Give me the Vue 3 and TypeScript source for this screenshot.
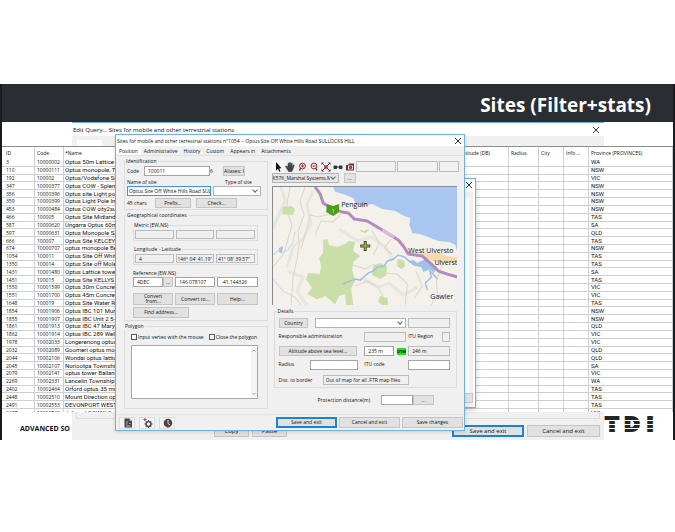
<script setup lang="ts">
import { ref } from 'vue'

interface Site {
  id: string
  code: string
  name: string
  province: string
}

const sites: Site[] = [
  ['3', '10000002', 'Optus 50m Lattice Tower', 'WA'],
  ['110', '10000111', 'Optus monopole, Tamworth', 'NSW'],
  ['192', '100002', 'Optus/Vodafone Site', 'VIC'],
  ['347', '10000377', 'Optus COW - Splendour', 'NSW'],
  ['356', '10000396', 'Optus site Light pole', 'NSW'],
  ['359', '10000399', 'Optus Light Pole Inner', 'NSW'],
  ['453', '10000484', 'Optus COW city2surf', 'NSW'],
  ['466', '100005', 'Optus Site Midlands', 'TAS'],
  ['587', '10000620', 'Ungarra Optus 60m', 'SA'],
  ['597', '10000631', 'Optus Monopole SAR', 'QLD'],
  ['666', '100007', 'Optus Site KELCEY TIER', 'TAS'],
  ['674', '10000707', 'optus monopole Bega', 'NSW'],
  ['1054', '100011', 'Optus Site Off White Hills', 'TAS'],
  ['1350', '100014', 'Optus Site off Mole Creek', 'TAS'],
  ['1431', '10001480', 'Optus Lattice tower', 'SA'],
  ['1451', '100015', 'Optus Site KELLYS LANE', 'TAS'],
  ['1550', '10001599', 'Optus 30m Concrete', 'VIC'],
  ['1551', '10001700', 'Optus 45m Concrete', 'VIC'],
  ['1648', '100019', 'Optus Site Water Reserve', 'TAS'],
  ['1854', '10001906', 'Optus IBC 101 Murray', 'NSW'],
  ['1855', '10001907', 'Optus IBC Unit 2 5-7', 'NSW'],
  ['1861', '10001913', 'Optus IBC 47 Mary St', 'QLD'],
  ['1862', '10001914', 'Optus IBC 289 Wellington', 'VIC'],
  ['1978', '10002033', 'Longerenong optus', 'VIC'],
  ['2032', '10002089', 'Goomeri optus mono', 'QLD'],
  ['2044', '10002106', 'Wondai optus lattice', 'QLD'],
  ['2045', '10002107', 'Nuriootpa Township', 'SA'],
  ['2079', '10002141', 'optus tower Ballan', 'VIC'],
  ['2269', '10002331', 'Lancelin Township', 'WA'],
  ['2402', '10002464', 'Orford optus 35 mq', 'TAS'],
  ['2448', '10002510', 'Mount Direction optus', 'TAS'],
  ['2491', '10002553', 'DEVONPORT WEST', 'TAS'],
  ['2697', '10002762', 'Julimar\\GGWW Optus', 'VIC'],
].map(([id, code, name, province]) => ({ id, code, name, province }))

const tabs = ['Position', 'Administrative', 'History', 'Custom', 'Appears in', 'Attachments']
const activeTab = ref('Position')

const code = ref('100011')
const siteName = ref('Optus Site Off White Hills Road SUL')
const refSystem = ref('4DEC')
const refLon = ref('146.078107')
const refLat = ref('-41.144326')
const altitude = ref('235 m')
const vertexMode = ref(false)
const closePolygon = ref(false)
</script>

<template>
  <main class="slide">
    <header class="banner"><h1>Sites (Filter+stats)</h1></header>

    <div class="stage">
      <section class="query" aria-label="Edit query">
        <div class="query-title">
          <span>Edit Query... Sites for mobile and other terrestrial stations</span>
          <button class="close big" aria-label="Close query">
            <svg viewBox="0 0 8 8"><path d="M1 1L7 7M7 1L1 7" /></svg>
          </button>
        </div>
        <div class="query-strip"><i></i></div>
        <div class="query-foot">
          <div class="query-panel"></div>
          <div class="query-actions">
            <button class="btn copy">Copy</button>
            <button class="btn paste">Paste</button>
            <button class="btn primary save">Save and exit</button>
            <button class="btn cancel">Cancel and exit</button>
          </div>
        </div>
      </section>

      <div class="grid-view">
        <table>
          <colgroup>
            <col class="c-id" /><col class="c-code" /><col /><col class="c-radius" />
            <col class="c-city" /><col class="c-city" /><col class="c-prov" />
          </colgroup>
          <thead>
            <tr>
              <th>ID</th><th>Code</th>
              <th><span class="name-head"><span>*Name</span><span>Altitude (DB)</span></span></th>
              <th>Radius</th><th>City</th><th>Info ...</th><th>Province (PROVINCES)</th>
            </tr>
          </thead>
          <tbody>
            <tr v-for="s in sites" :key="s.id">
              <td>{{ s.id }}</td><td>{{ s.code }}</td><td class="wide">{{ s.name }}</td>
              <td></td><td></td><td></td><td class="wide">{{ s.province }}</td>
            </tr>
          </tbody>
        </table>
      </div>

      <footer class="foot">
        <strong>ADVANCED SO</strong>
      </footer>
      <svg class="logo" viewBox="0 0 50 16" role="img" aria-label="TDI">
        <g text-anchor="middle">
          <text x="8" y="15">T</text><text x="28" y="15">D</text><text x="46" y="15">I</text>
        </g>
        <path d="M0 4.500H50M0 8.500H50M0 12.500H50" stroke="#fff" stroke-width="1" />
      </svg>

      <section class="back-window" aria-label="Background window">
        <button class="close" aria-label="Close background window">
          <svg viewBox="0 0 8 8"><path d="M1 1L7 7M7 1L1 7" /></svg>
        </button>
        <div class="back-body"></div>
        <div class="back-foot"><i></i></div>
      </section>

      <section class="dialog" aria-label="Site">
        <div class="title">
          <span>Sites for mobile and other terrestrial stations n°1054 -- Optus Site Off White Hills Road SULLOCKS HILL</span>
          <button class="close" aria-label="Close">
            <svg viewBox="0 0 8 8"><path d="M1 1L7 7M7 1L1 7" /></svg>
          </button>
        </div>
        <nav class="tabs">
          <button v-for="t in tabs" :key="t" :class="{ on: t === activeTab }" @click="activeTab = t">{{ t }}</button>
        </nav>

        <div class="body">
          <div class="left">
            <fieldset class="ident">
              <legend>Identification</legend>
              <div class="row code-row">
                <label for="code">Code</label>
                <input id="code" v-model="code" />
                <span>6</span>
                <button class="btn aliases">Aliases: 0</button>
              </div>
              <div class="site-grid">
                <label for="name">Name of site</label>
                <label for="type" class="type-label">Type of site</label>
                <input id="name" v-model="siteName" class="focus" />
                <div class="pick"><select id="type"><option></option></select></div>
              </div>
              <div class="row chars-row">
                <span>45 chars</span>
                <button class="btn">Prefix...</button>
                <button class="btn">Check...</button>
              </div>
            </fieldset>

            <fieldset class="geo">
              <legend>Geographical coordinates</legend>
              <fieldset class="inner">
                <legend>Metric (EW,NS)</legend>
                <div class="trio">
                  <input aria-label="Metric zone" readonly /><input aria-label="Metric east" readonly /><input aria-label="Metric north" readonly />
                </div>
              </fieldset>
              <fieldset class="inner">
                <legend>Longitude - Latitude</legend>
                <div class="trio">
                  <input aria-label="Zone" readonly value="4" />
                  <input aria-label="Longitude" class="tight" readonly value="146° 04' 41.19&quot;" />
                  <input aria-label="Latitude" class="tight" readonly value="41° 08' 39.57&quot;" />
                </div>
              </fieldset>
              <label class="ref-label" for="refsys">Reference (EW,NS)</label>
              <div class="trio ref-row">
                <div class="joined"><input id="refsys" v-model="refSystem" /><button class="btn">...</button></div>
                <input v-model="refLon" aria-label="Reference longitude" />
                <input v-model="refLat" aria-label="Reference latitude" />
              </div>
              <div class="trio tool-row">
                <button class="btn">Convert<br />from...</button>
                <button class="btn">Convert to...</button>
                <button class="btn">Help...</button>
              </div>
              <button class="btn find">Find address...</button>
            </fieldset>

            <fieldset class="poly">
              <legend>Polygon</legend>
              <div class="row checks">
                <label><input v-model="vertexMode" type="checkbox" />Input vertex with the mouse</label>
                <label><input v-model="closePolygon" type="checkbox" />Close the polygon</label>
              </div>
              <div class="area">
                <textarea aria-label="Polygon vertices"></textarea>
                <svg class="bar" viewBox="0 0 6 50"><path d="M1.500 4.500L3 3L4.500 4.500M1.500 46L3 47.500L4.500 46" /></svg>
              </div>
            </fieldset>
          </div>

          <div class="right">
            <div class="toolbar">
              <button class="tool on" aria-label="Select"><svg viewBox="0 0 10 10"><path d="M3 0V8.500L5 6.800L6.300 9.800L7.500 9.300L6.300 6.300H8.500Z" fill="#111" /></svg></button>
              <button class="tool" aria-label="Pan"><svg viewBox="0 0 10 10"><path d="M.5 4.500L2 4L3 5.500V1.500L4 1.300L4.400 4V.6L5.500 .5V4L6.400 1L7.300 1.300L7 4.500L8.500 2.800L9.300 3.300L7.800 7.500L6.500 9.800H3.800Z" fill="#444" stroke="#444" stroke-width=".6" /></svg></button>
              <button class="tool" aria-label="Zoom in"><svg viewBox="0 0 10 10"><circle cx="5.500" cy="4" r="2.900" fill="#fbe9e9" stroke="#863338" stroke-width="1" /><path d="M4 4H7M5.500 2.500V5.500" stroke="#d4262c" stroke-width="1.100" /><path d="M3.600 6.200L2.400 8.500" stroke="#444" stroke-width="1.400" /></svg></button>
              <button class="tool" aria-label="Zoom out"><svg viewBox="0 0 10 10"><circle cx="5" cy="4" r="2.900" fill="#fbe9e9" stroke="#863338" stroke-width="1" /><path d="M3.500 4H6.500" stroke="#d4262c" stroke-width="1.100" /><path d="M6.800 6.200L8 8.500" stroke="#444" stroke-width="1.400" /></svg></button>
              <button class="tool" aria-label="Full extent"><svg viewBox="0 0 10 10"><path d="M1.500 1.500L8.500 8.500M8.500 1.500L1.500 8.500" stroke="#555" stroke-width="1" /><path d="M3.300 3.300H6.700V6.700H3.300Z" fill="#d4262c" /><path d="M.5 .5H3L.5 3ZM7 .5H9.500V3ZM9.500 7V9.500H7ZM3 9.500H.5V7Z" fill="#444" /></svg></button>
              <button class="tool" aria-label="Find"><svg viewBox="0 0 10 10"><rect x=".5" y="3.500" width="3.600" height="3.600" rx="1" fill="#333" /><rect x="5.900" y="3.500" width="3.600" height="3.600" rx="1" fill="#333" /><path d="M4 5H6" stroke="#333" /></svg></button>
              <button class="tool" aria-label="Snapshot"><svg viewBox="0 0 10 10"><path d="M1 3H3L4 1.500H9V8.500H1Z" fill="#444" /><rect x="3" y="3.500" width="5" height="4" fill="#eee" /><circle cx="5.600" cy="5.500" r="1.700" fill="#d4262c" /></svg></button>
              <div class="readouts"><i></i><i></i><i></i></div>
            </div>
            <div class="row layer-row">
              <div class="pick layer"><select aria-label="Map layer"><option>K576_Marshal Systems.M</option></select></div>
              <button class="btn">...</button>
            </div>

            <svg class="map" viewBox="0 0 184 118" preserveAspectRatio="xMidYMid slice">
              <rect width="184" height="118" fill="#f3f1ea" />
              <g fill="none" stroke="#e7e5df" stroke-width="3">
                <path d="M8 0L12 14L4 32L0 42M40 4L34 18L38 36L30 52L20 60L14 80" /><path d="M66 42L84 54L98 50L112 60L120 74" /><path d="M90 92L104 100L116 96L130 108L144 100" /><path d="M14 84L30 90L24 104L34 118" />
              </g>
              <g fill="none" stroke="#ded6c5" stroke-width="1">
                <path d="M32 0L27 14L31 28L25 44L26 58L24 72L20 90L18 118" /><path d="M58 27L45 30L37 28L33 44L28 62" /><path d="M17 0L13 22L19 38L14 56L10 68L0 80" /><path d="M68 27L60 35L48 34L42 48" /><path d="M169 78L163 94L164 106L158 118" /><path d="M80 78L92 82L101 77L110 86L124 87L134 97L132 118" /><path d="M99 44L106 56L100 68M118 52L111 61L119 67" /><path d="M82 99L94 94L104 99L111 112M143 85L149 99L141 111" />
              </g>
              <g fill="none" stroke="#c7d9eb" stroke-width="1">
                <path d="M0 68L7 62L9 66L15 63L20 55L22 45" /><path d="M0 92L10 104L22 110L28 118" />
              </g>
              <path d="M6 61L10 59L9 66L6 65Z" fill="#a3c2ed" />
              <path d="M60 0L62 5L70 7L80 11L83 17L89 19L99 17L109 22L122 24L131 29L137 31L136 38L139 46L146 47L152 49L165 54L176 55L182 58L184 66V0Z" fill="#a9c6f1" />
              <g fill="#c9dfa7">
                <path d="M50 53L54 52L56 58L64 60L72 57L76 54L82 55L80 64L87 69L80 75L79 83L82 94L78 101L80 118H73L72 107L66 109L62 117L52 109L44 112L34 107L39 101L33 92L35 86L47 87L48 79L46 71L50 66Z" />
                <path d="M10 20L18 19L22 22L20 28L9 27Z" /><path d="M100 79L107 76L114 80L113 88L107 92L99 88Z" /><path d="M124 72L130 73L132 79L128 82L124 79Z" /><path d="M86 42L90 44L96 42L93 46L88 45Z" /><path d="M107 109L114 111L115 118H108L105 114Z" />
              </g>
              <path d="M146 65L158 67L165 65L173 69L184 70V76L170 76L160 74L152 71Z" fill="#f3d9ae" />
              <path d="M69 97L82 92L87 93L95 86L100 84L104 80L111 79L114 74L120 72L125 68L131 70L137 75" fill="none" stroke="#9dbfe2" stroke-width="1.500" />
              <path d="M134 74L140 73L144 76L152 72L158 76L164 81L160 86L157 82L150 85L148 80L141 79Z" fill="#9ec1ea" />
              <path d="M156 82L158 90L152 96L154 103M157 84L164 92" fill="none" stroke="#9ec1ea" stroke-width="1.500" />
              <path d="M42 0L47 7L50 16L59 22L69 25L75 26L81 32L94 34L109 43L125 53L130 59L135 67L149 69L157 76L165 84L174 87L184 90" fill="none" stroke="#b58bbd" stroke-width="3" stroke-linejoin="round" />
              <path d="M109 43L121 50" stroke="#deb9df" stroke-width="3" />
              <path d="M54 17L60 19L66 17V25L60 29L53 25Z" fill="#4c9e1b" />
              <text class="shield" x="60" y="26" text-anchor="middle">1</text>
              <path d="M92 54V64M87 59H97" stroke="#454b25" stroke-width="3" /><path d="M92 55V63M88 59H96" stroke="#b5cf38" stroke-width="1" />
              <text x="68" y="20">Penguin</text><text x="135" y="66">West Ulversto</text><text x="161" y="78">Ulverst</text><text x="157" y="112">Gawler</text>
            </svg>

            <fieldset class="details">
              <legend>Details</legend>
              <div class="d-grid">
                <button class="btn country">Country</button>
                <div class="pick country-pick"><select aria-label="Country"><option></option></select></div>
                <input class="c4" aria-label="Country code" readonly />

                <label for="resp" class="resp">Responsible administration</label>
                <input id="resp" class="c3" readonly />
                <div class="c4 region"><label for="region">ITU Region</label><input id="region" readonly /></div>

                <button class="btn alt">Altitude above sea level...</button>
                <div class="c3 alt-in"><input v-model="altitude" aria-label="Altitude" /><mark>DTM</mark></div>
                <input class="c4" aria-label="Terrain altitude" readonly value="246 m" />

                <label for="radius">Radius</label>
                <input id="radius" class="radius" />
                <label for="itu" class="c3">ITU code</label>
                <input id="itu" class="c4" />
              </div>
              <div class="row border-row">
                <label for="border">Dist. to border</label>
                <input id="border" readonly value="Out of map for all .FTR map files" />
              </div>
            </fieldset>
            <div class="row protect">
              <label for="prot">Protection distance(m)</label>
              <div class="joined"><input id="prot" /><button class="btn">...</button></div>
            </div>
          </div>
        </div>

        <div class="actions">
          <div class="icons">
            <button aria-label="Report"><svg viewBox="0 0 10 10"><path d="M1.500 .5H6.500L9 3V9.500H1.500Z" fill="#444" /><path d="M6.500 .5V3H9" fill="#bbb" /><path d="M3 4H5M3 6H4.500M6 5.500H7.500M3 8H7.500" stroke="#ddd" stroke-width=".8" /></svg></button>
            <button aria-label="Settings"><svg viewBox="0 0 10 10"><circle cx="5.500" cy="6" r="2.400" fill="none" stroke="#444" stroke-width="1.400" /><path d="M5.500 2V3M5.500 9V10M1.500 6H3M8 6H9.500M2.800 3.300L3.600 4.100M8.200 3.300L7.400 4.100M2.800 8.700L3.600 7.900M8.200 8.700L7.400 7.900" stroke="#444" stroke-width="1.200" /><path d="M.5 1.500H3.500M2 0V3" stroke="#d4262c" /></svg></button>
            <button aria-label="History"><svg viewBox="0 0 10 10"><circle cx="5" cy="5" r="4.300" fill="#4c4143" /><path d="M5 2V5.500L7 7" fill="none" stroke="#eee" /><path d="M2 8L5 9.800L7 8.500" fill="#d4262c" /></svg></button>
          </div>
          <button class="btn primary">Save and exit</button>
          <button class="btn">Cancel and exit</button>
          <button class="btn">Save changes</button>
        </div>
      </section>
    </div>
  </main>
</template>

<style>
body {
  background: #fff;
}
</style>

<style scoped>
* {
  box-sizing: border-box;
}
.slide {
  margin-top: 84px;
  border: solid #1b1c1f;
  border-width: 0 2px;
  background: #fff;
  font: 5px/8px 'Open Sans', sans-serif;
  color: #111;
  overflow: hidden;
}
.banner {
  height: 38px;
  padding: 0 22px;
  background: #2a2d32;
  display: flex;
  align-items: center;
  justify-content: flex-end;
}
h1 {
  margin: 4px 0 0;
  font: bold 19px/24px 'Open Sans', sans-serif;
  color: #fff;
}
.stage {
  position: relative;
  height: 318px;
}
button,
input,
select,
textarea {
  font: inherit;
  color: inherit;
  margin: 0;
  padding: 0;
  min-width: 0;
  border-radius: 0;
}
label,
legend {
  white-space: nowrap;
}
input,
textarea {
  width: 100%;
  height: 10px;
  padding: 0 3px;
  border: 1px solid #a5a5a5;
  background: #fff;
  outline: 0;
}
input[readonly] {
  background: #efefef;
  border-color: #bcbcbc;
}
input.tight {
  padding: 0 1px;
}
.btn {
  height: 10px;
  padding: 0;
  border: 1px solid #c4c4c4;
  background: #e1e1e1;
  line-height: 7px;
  text-align: center;
  white-space: nowrap;
}
.btn.primary {
  border: 1px solid #1883d7;
  outline: 1px solid #1883d7;
  outline-offset: -2px;
}
.close {
  width: 8px;
  height: 8px;
  border: 0;
  background: none;
  display: flex;
  flex: none;
}
.close svg {
  width: 100%;
  fill: none;
  stroke: #333;
  stroke-width: 1;
}
.row {
  display: flex;
  align-items: center;
}

/* query window */
.query {
  position: absolute;
  inset: 0 69px 0 70px;
  border-top: 1px solid #6fb1e2;
  background: #f0f0f0;
  display: flex;
  flex-direction: column;
}
.query-title {
  height: 13px;
  padding: 0 4px 0 1px;
  background: #fff;
  display: flex;
  justify-content: space-between;
  align-items: center;
  font-size: 6px;
}
.query-strip {
  padding: 4px 5px 0;
  display: flex;
}
.query-strip i {
  width: 25px;
  height: 6px;
  background: #fff;
}
.query-foot {
  margin-top: auto;
}
.query-panel {
  height: 6px;
  margin: 0 4px;
  border: 1px solid #dcdcdc;
  border-top: 0;
}
.query-actions {
  display: flex;
  gap: 3px;
  padding: 6px 4px 3px 142px;
  font-size: 6px;
}
.query-actions .btn {
  height: 12px;
}
.copy,
.paste {
  width: 35px;
}
.save {
  width: 72px;
  margin-left: auto;
}
.cancel {
  width: 73px;
}

/* result grid */
.grid-view {
  position: absolute;
  inset: 24px 0 28px 0;
  overflow: hidden;
  border-top: 1px solid #8d8d8d;
  background: #fff;
}
table {
  width: 100%;
  height: 270px;
  border-spacing: 0;
  table-layout: fixed;
}
.c-id {
  width: 33px;
}
.c-code {
  width: 29px;
}
.c-radius {
  width: 30px;
}
.c-city {
  width: 25px;
}
.c-prov {
  width: 84px;
}
th,
td {
  padding: 0 1px;
  line-height: 6px;
  text-align: left;
  font-weight: normal;
  white-space: nowrap;
  overflow: hidden;
  border: solid #cfcfcf;
  border-width: 0 1px 1px 0;
}
th {
  height: 12px;
  border-bottom: 0;
}
td.wide {
  font-family: Roboto, sans-serif;
  font-size: 6px;
}
th:first-child,
td:first-child {
  padding-left: 4px;
}
th:nth-child(2),
td:nth-child(2) {
  padding: 0 0 0 2px;
}
th:nth-child(n + 4),
td:last-child {
  padding-left: 2px;
}
.name-head {
  display: flex;
  justify-content: space-between;
  padding-right: 17px;
}

.foot {
  position: absolute;
  left: 0;
  bottom: 0;
  width: 70px;
  height: 28px;
  padding: 11px 0 0 18px;
  background: #fff;
  overflow: hidden;
  font: 7px/11px 'Open Sans', sans-serif;
  white-space: nowrap;
}
.logo {
  position: absolute;
  right: 19px;
  bottom: 8px;
  width: 50px;
  height: 16px;
}
.logo text {
  font: bold 19px 'DejaVu Sans', sans-serif;
  fill: #22252a;
  stroke: #22252a;
  stroke-width: 2px;
}

/* window behind the dialog */
.back-window {
  position: absolute;
  inset: 56px 197px 32px 340px;
  border: 1px solid #6fb1e2;
  background: #fff;
  box-shadow: 0 2px 6px #0003;
  display: flex;
  flex-direction: column;
  align-items: flex-end;
  padding: 2px 2px 0 0;
}
.back-body {
  margin-top: 3px;
  flex: 1;
  width: 100%;
  border-right: 4px solid #f0f0f0;
  border-top: 6px solid #f0f0f0;
}
.back-foot {
  width: 100%;
  height: 14px;
  background: #f0f0f0;
  padding-bottom: 3px;
}
.back-foot i {
  display: block;
  height: 10px;
  border: 1px solid #c4c4c4;
  background: #e1e1e1;
}

/* site dialog */
.dialog {
  position: absolute;
  inset: 12px 208px 9px 113px;
  border: 1px solid #6fb1e2;
  background: #f0f0f0;
  box-shadow: 0 1px 4px #0002;
  display: flex;
  flex-direction: column;
}
.title {
  height: 11px;
  padding: 0 2px 0 1px;
  background: #fff;
  display: flex;
  align-items: center;
  justify-content: space-between;
  white-space: nowrap;
}
.tabs {
  height: 10px;
  display: flex;
  border-bottom: 1px solid #e0e0e0;
}
.tabs button {
  border: 0;
  background: none;
  padding: 0 3px;
}
.tabs .on {
  background: #fff;
}
.body {
  flex: 1;
  display: flex;
  gap: 4px;
  padding: 1px 5px 0 8px;
}
.left {
  flex: 144;
  min-width: 0;
}
.right {
  flex: 188;
  min-width: 0;
}
fieldset {
  min-width: 0;
  margin: 0;
  padding: 0;
  border: 1px solid #dcdcdc;
}
legend {
  margin-left: -2px;
  padding: 0 1px;
  line-height: 8px;
}
.ident {
  height: 53px;
  padding: 1px 6px 0 2px;
  margin-bottom: 1px;
}
.code-row label {
  width: 17px;
}
.code-row input {
  width: 66px;
}
.code-row span {
  width: 13px;
}
.aliases {
  width: 22px;
  overflow: hidden;
}
.site-grid {
  display: grid;
  grid-template-columns: 85fr 48fr;
  column-gap: 2px;
  padding-top: 2px;
}
.type-label {
  padding-left: 12px;
}
input.focus {
  border-color: #3f95dc;
  padding: 0 0 0 1px;
}
.pick {
  position: relative;
  display: flex;
}
.pick select {
  width: 100%;
  height: 10px;
  border: 1px solid #b4b4b4;
  background: #fff;
  appearance: none;
}
.pick::after {
  content: '';
  position: absolute;
  right: 4px;
  top: 2px;
  width: 3px;
  height: 3px;
  border: solid #666;
  border-width: 0 1px 1px 0;
  transform: rotate(45deg);
}
.chars-row {
  gap: 5px;
  padding-top: 2px;
}
.chars-row span {
  width: 23px;
  white-space: nowrap;
}
.chars-row .btn {
  width: 36px;
}
.chars-row .btn:last-child {
  width: 41px;
}
.geo {
  height: 110px;
  padding: 2px 9px 0 8px;
  margin-bottom: 1px;
}
.geo > legend,
.poly > legend {
  margin-left: -7px;
}
.inner {
  padding: 1px 2px 1px 1px;
  margin-bottom: 4px;
}
.inner input {
  height: 9px;
}
.trio {
  display: grid;
  grid-template-columns: repeat(3, 1fr);
  gap: 2px;
}
.ref-label {
  display: block;
}
.joined {
  display: flex;
}
.joined .btn {
  flex: 0 0 10px;
}
.tool-row {
  padding-top: 6px;
}
.tool-row .btn {
  height: 12px;
  line-height: 5px;
}
.find {
  display: block;
  width: 56px;
  margin-top: 2px;
  height: 11px;
}
.poly {
  height: 87px;
  padding: 3px 9px 0 6px;
}
.checks {
  gap: 5px;
}
.checks label {
  display: flex;
  align-items: center;
  gap: 1px;
}
.checks input {
  width: 6px;
  height: 6px;
  appearance: none;
  padding: 0;
  border-color: #555;
}
.area {
  position: relative;
  margin-top: 4px;
  display: flex;
}
.area textarea {
  height: 54px;
  resize: none;
}
.bar {
  position: absolute;
  right: 1px;
  top: 2px;
  width: 6px;
  height: 50px;
  background: #f4f4f4;
  fill: none;
  stroke: #999;
}

.toolbar {
  display: flex;
  height: 12px;
  margin-top: 4px;
}
.tool {
  width: 12px;
  height: 12px;
  padding: 1px;
  border: 0;
  background: none;
  flex: none;
}
.tool svg,
.icons svg {
  display: block;
  width: 10px;
  height: 10px;
}
.tool.on {
  background: #f8f8f8;
}
.readouts {
  flex: 1;
  display: grid;
  grid-template-columns: 40fr 40fr 20fr;
  gap: 1px;
}
.readouts i {
  border: 1px solid #bcbcbc;
  height: 11px;
}
.layer-row {
  gap: 5px;
}
.layer {
  width: 67px;
}
.layer select {
  background: #e6e6e6;
  padding: 0 8px 0 0;
}
.layer-row .btn {
  width: 12px;
}
.map {
  display: block;
  width: calc(100% - 2px);
  height: 119px;
  margin-top: 3px;
  border: solid #8a8a8a;
  border-width: 1px 0 0 1px;
}
.map text {
  font: 7px 'Open Sans', sans-serif;
  fill: #222;
}
.map .shield {
  fill: #d6efb8;
  font-size: 6px;
}
.details {
  height: 81px;
  margin: 2px 2px 0 2px;
  padding: 3px 6px 0 4px;
}
.d-grid {
  display: grid;
  grid-template-columns: 30fr 52fr 42fr 42fr;
  column-gap: 2px;
  row-gap: 4px;
  align-items: center;
}
.d-grid > * {
  height: 10px;
}
.country-pick {
  grid-column: 2 / 4;
  margin-left: 5px;
}
.c3 {
  grid-column: 3;
}
.c4 {
  grid-column: 4;
}
.resp,
.alt {
  grid-column: 1 / 3;
}
.alt {
  margin-right: 5px;
}
.radius {
  width: 48px;
}
.region {
  display: flex;
  justify-content: space-between;
  white-space: nowrap;
}
.region input {
  width: 8px;
  padding: 0;
}
.alt-in {
  display: flex;
  gap: 3px;
  align-items: center;
}
mark {
  background: #1fe51f;
  color: #111;
  font-weight: bold;
  font-size: 4px;
  line-height: 7px;
  text-align: center;
  flex: 0 0 9px;
}
.border-row {
  padding-top: 5px;
  gap: 9px;
}
.border-row label {
  flex: 0 0 35px;
}
.border-row input {
  width: 86px;
  padding: 0 2px;
}
.protect {
  padding: 7px 25px 0 46px;
  justify-content: space-between;
}
.protect .joined {
  width: 53px;
}
.protect .btn {
  flex-basis: 21px;
}
.actions {
  display: flex;
  gap: 2px;
  height: 16px;
  padding: 2px 1px 2px 3px;
  border-top: 1px solid #e2e2e2;
}
.actions .btn {
  width: 61px;
  height: 11px;
}
.icons {
  display: flex;
  gap: 4px;
  margin-right: auto;
}
.icons button {
  width: 16px;
  height: 12px;
  padding: 0 3px;
  border: 1px solid #ddd;
  background: #f4f4f4;
}
</style>
